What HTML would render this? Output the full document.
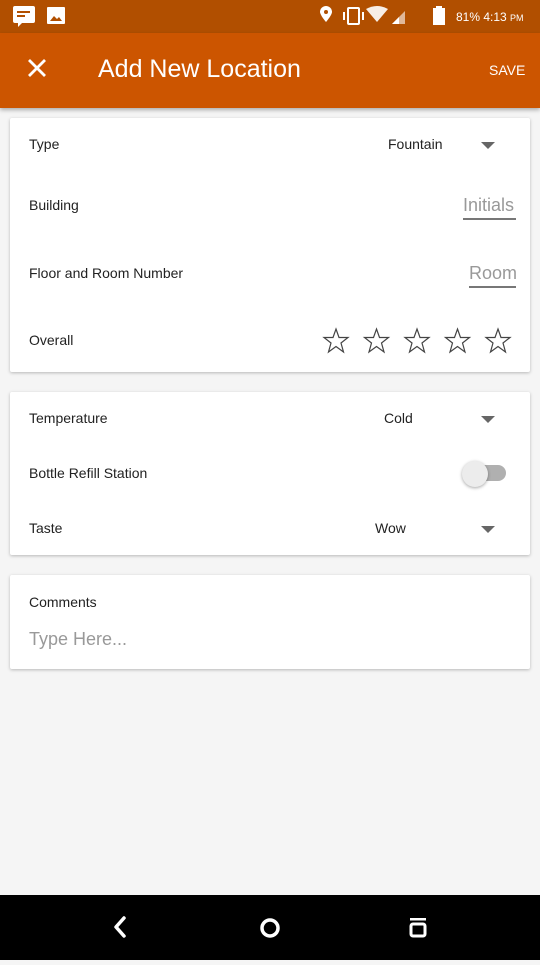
<!DOCTYPE html>
<html><head><meta charset="utf-8"><style>
*{margin:0;padding:0;box-sizing:border-box}
body{width:540px;height:960px;background:#f5f5f5;font-family:"Liberation Sans",sans-serif;position:relative;overflow:hidden;color:#222}
.sb{position:absolute;top:0;left:0;width:540px;height:33px;background:#b14f00}
.tb{position:absolute;top:33px;left:0;width:540px;height:75px;background:#cc5500;box-shadow:0 2px 4px rgba(0,0,0,.3)}
.card{position:absolute;left:10px;width:520px;background:#fff;box-shadow:0 1px 3px rgba(0,0,0,.25);border-radius:2px}
.t{position:absolute;font-size:14px;color:#222}
.tri{position:absolute;width:0;height:0;border-left:7px solid transparent;border-right:7px solid transparent;border-top:7px solid #666}
.nav{position:absolute;top:895px;left:0;width:540px;height:65px;background:#000}
</style></head><body>
<div class="sb">
<svg width="540" height="33" style="position:absolute;left:0;top:0">
<rect x="13" y="6" width="22" height="17" rx="2" fill="#fff"/><path d="M18 23 L22 23 L18 27Z" fill="#fff"/>
<rect x="17" y="11" width="13" height="2" fill="#b14f00"/><rect x="17" y="15" width="8" height="2" fill="#b14f00"/>
<rect x="47" y="7" width="18" height="17" rx="1" fill="#fff"/><path d="M50 21 L54 16 L57 19 L59 17 L62 21Z" fill="#b14f00"/>
<path d="M326 22 C320 15 320 12 320 12 A6 6 0 0 1 332 12 C332 15 326 22 326 22Z" fill="#fff"/><circle cx="326" cy="12" r="2" fill="#b14f00"/>
<rect x="348" y="8" width="11" height="16" rx="1" fill="none" stroke="#fff" stroke-width="2"/><rect x="343" y="12" width="2" height="8" fill="#fff"/><rect x="362" y="12" width="2" height="8" fill="#fff"/>
<path d="M366 9 Q377 3 388 9 L377 22Z" fill="#fff" opacity=".9"/>
<path d="M392 24 L405 11 L405 24Z" fill="#fff" opacity=".6"/><path d="M392 24 L399 17 L399 24Z" fill="#fff"/>
<rect x="433" y="8" width="12" height="17" fill="#fff"/><rect x="436" y="6" width="6" height="2" fill="#fff"/>
<text x="456" y="21" font-size="12" fill="#fff" font-family="Liberation Sans">81% 4:13 <tspan font-size="9">PM</tspan></text>
</svg></div>
<div class="tb">
<svg width="30" height="30" style="position:absolute;left:24px;top:22px"><path d="M5 5L21 21M21 5L5 21" stroke="#fff" stroke-width="2.8"/></svg>
<div style="position:absolute;left:98px;top:22px;font-size:25px;color:#fff">Add New Location</div>
<div style="position:absolute;left:489px;top:29px;font-size:14px;color:#fff">SAVE</div>
</div>
<div class="card" style="top:118px;height:254px">
<div class="t" style="left:19px;top:18px">Type</div>
<div class="t" style="left:378px;top:18px">Fountain</div>
<div class="tri" style="left:471px;top:24px"></div>
<div class="t" style="left:19px;top:79px">Building</div>
<div style="position:absolute;left:453px;top:77px;font-size:18px;color:#999">Initials</div>
<div style="position:absolute;left:453px;top:100px;width:53px;height:1.5px;background:#777"></div>
<div class="t" style="left:19px;top:147px">Floor and Room Number</div>
<div style="position:absolute;left:459px;top:145px;font-size:18px;color:#999">Room</div>
<div style="position:absolute;left:459px;top:168px;width:47px;height:1.5px;background:#777"></div>
<div class="t" style="left:19px;top:214px">Overall</div>
<svg width="200" height="30" style="position:absolute;left:310px;top:208px">
<g fill="none" stroke="#444" stroke-width="1.2">
<path id="s" d="M16 3 L19 11.5 L28 11.5 L21 17 L23.5 26 L16 20.5 L8.5 26 L11 17 L4 11.5 L13 11.5Z"/>
<use href="#s" x="40.5"/><use href="#s" x="81"/><use href="#s" x="121.5"/><use href="#s" x="162"/>
</g></svg>
</div>
<div class="card" style="top:392px;height:163px">
<div class="t" style="left:19px;top:18px">Temperature</div>
<div class="t" style="left:374px;top:18px">Cold</div>
<div class="tri" style="left:471px;top:24px"></div>
<div class="t" style="left:19px;top:73px">Bottle Refill Station</div>
<div style="position:absolute;left:459px;top:73px;width:37px;height:16px;border-radius:8px;background:#b0b0b0"></div>
<div style="position:absolute;left:452px;top:69px;width:26px;height:26px;border-radius:13px;background:#ececec;box-shadow:0 1px 3px rgba(0,0,0,.35)"></div>
<div class="t" style="left:19px;top:128px">Taste</div>
<div class="t" style="left:365px;top:128px">Wow</div>
<div class="tri" style="left:471px;top:134px"></div>
</div>
<div class="card" style="top:575px;height:94px">
<div class="t" style="left:19px;top:19px">Comments</div>
<div style="position:absolute;left:19px;top:54px;font-size:18px;color:#999">Type Here...</div>
</div>
<div class="nav">
<svg width="540" height="65">
<path d="M124 23 L116 32 L124 41" fill="none" stroke="#fff" stroke-width="3.5" stroke-linecap="round" stroke-linejoin="round"/>
<circle cx="270" cy="33" r="8" fill="none" stroke="#fff" stroke-width="3.5"/>
<rect x="410" y="23" width="16" height="2.5" fill="#fff"/>
<rect x="411" y="29" width="14" height="12" rx="2" fill="none" stroke="#fff" stroke-width="3"/>
</svg></div>
</body></html>
